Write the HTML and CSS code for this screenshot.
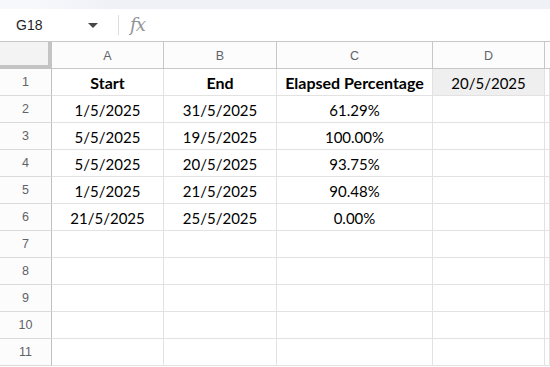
FILE: index.html
```html
<!DOCTYPE html>
<html>
<head>
<meta charset="utf-8">
<link rel="stylesheet" href="styles.css">
</head>
<body>
<div class="app">
  <div class="topstrip"></div>
  <div class="formulabar">
    <div class="namebox">
      <span class="name">G18</span>
      <svg class="caret" width="10" height="6" viewBox="0 0 10 6"><path d="M0 0h10L5 5z" fill="#444746"/></svg>
    </div>
    <div class="divider"></div>
    <span class="fx">fx</span>
  </div>
  <div class="grid">
    <div class="corner"></div>
    <div class="colhead">A</div>
    <div class="colhead">B</div>
    <div class="colhead">C</div>
    <div class="colhead">D</div>
    <div class="colhead last"></div>

    <div class="rowhead">1</div>
    <div class="cell bold">Start</div>
    <div class="cell bold">End</div>
    <div class="cell bold">Elapsed Percentage</div>
    <div class="cell filled">20/5/2025</div>
    <div class="cell"></div>

    <div class="rowhead">2</div>
    <div class="cell">1/5/2025</div>
    <div class="cell">31/5/2025</div>
    <div class="cell">61.29%</div>
    <div class="cell"></div>
    <div class="cell"></div>

    <div class="rowhead">3</div>
    <div class="cell">5/5/2025</div>
    <div class="cell">19/5/2025</div>
    <div class="cell">100.00%</div>
    <div class="cell"></div>
    <div class="cell"></div>

    <div class="rowhead">4</div>
    <div class="cell">5/5/2025</div>
    <div class="cell">20/5/2025</div>
    <div class="cell">93.75%</div>
    <div class="cell"></div>
    <div class="cell"></div>

    <div class="rowhead">5</div>
    <div class="cell">1/5/2025</div>
    <div class="cell">21/5/2025</div>
    <div class="cell">90.48%</div>
    <div class="cell"></div>
    <div class="cell"></div>

    <div class="rowhead">6</div>
    <div class="cell">21/5/2025</div>
    <div class="cell">25/5/2025</div>
    <div class="cell">0.00%</div>
    <div class="cell"></div>
    <div class="cell"></div>

    <div class="rowhead">7</div>
    <div class="cell"></div><div class="cell"></div><div class="cell"></div><div class="cell"></div><div class="cell"></div>
    <div class="rowhead">8</div>
    <div class="cell"></div><div class="cell"></div><div class="cell"></div><div class="cell"></div><div class="cell"></div>
    <div class="rowhead">9</div>
    <div class="cell"></div><div class="cell"></div><div class="cell"></div><div class="cell"></div><div class="cell"></div>
    <div class="rowhead">10</div>
    <div class="cell"></div><div class="cell"></div><div class="cell"></div><div class="cell"></div><div class="cell"></div>
    <div class="rowhead">11</div>
    <div class="cell"></div><div class="cell"></div><div class="cell"></div><div class="cell"></div><div class="cell"></div>
  </div>
</div>
</body>
</html>
```
FILE: styles.css
```css
html, body {
  margin: 0;
  padding: 0;
  background: #ffffff;
  overflow: hidden;
}
.app {
  width: 550px;
  height: 367px;
  overflow: hidden;
  font-family: "Liberation Sans", Arial, sans-serif;
}
.topstrip {
  height: 9px;
  background: linear-gradient(to right, #f7f8fb 0, #f7f8fb 35px, #eff1f7 110px, #eff1f7 100%);
}
.formulabar {
  height: 32px;
  display: flex;
  align-items: center;
  background: #ffffff;
}
.namebox {
  width: 106px;
  display: flex;
  align-items: center;
  justify-content: space-between;
  padding-left: 16px;
  padding-right: 8px;
  box-sizing: border-box;
}
.name {
  font-size: 14px;
  color: #1f1f1f;
}
.caret {
  display: block;
  margin-top: 1px;
}
.divider {
  width: 1px;
  height: 20px;
  background: #dadce0;
  margin-left: 12px;
  margin-right: 11px;
}
.fx {
  font-family: "DejaVu Serif", "Liberation Serif", serif;
  font-style: italic;
  font-size: 18px;
  color: #8f9397;
  letter-spacing: -1px;
  margin-top: -2px;
}
.grid {
  display: grid;
  grid-template-columns: 52px 112px 113px 156px 112px 1fr;
  grid-auto-rows: 27px;
  border-top: 1px solid #c7c7c7;
}
.corner {
  background: #f3f3f3;
  border-right: 4px solid #c4c4c4;
  border-bottom: 4px solid #c4c4c4;
}
.colhead {
  display: flex;
  align-items: center;
  justify-content: center;
  font-size: 12.5px;
  color: #5f6368;
  background: #fcfcfc;
  border-right: 1px solid #c7c7c7;
  border-bottom: 1px solid #c7c7c7;
  padding-top: 1px;
}
.colhead.last {
  border-right: none;
}
.rowhead {
  display: flex;
  align-items: center;
  justify-content: center;
  font-size: 12.5px;
  color: #5f6368;
  background: #fcfcfc;
  border-right: 1px solid #c0c0c0;
  border-bottom: 1px solid #dadada;
}
.cell {
  display: flex;
  align-items: flex-end;
  justify-content: center;
  padding-bottom: 3px;
  font-family: Lato, "Open Sans", sans-serif;
  font-size: 15px;
  color: #000;
  border-right: 1px solid #e2e2e2;
  border-bottom: 1px solid #e2e2e2;
  white-space: nowrap;
}
.cell.bold {
  font-weight: 700;
  font-size: 16px;
}
.cell.filled {
  background: #efefef;
}
```
